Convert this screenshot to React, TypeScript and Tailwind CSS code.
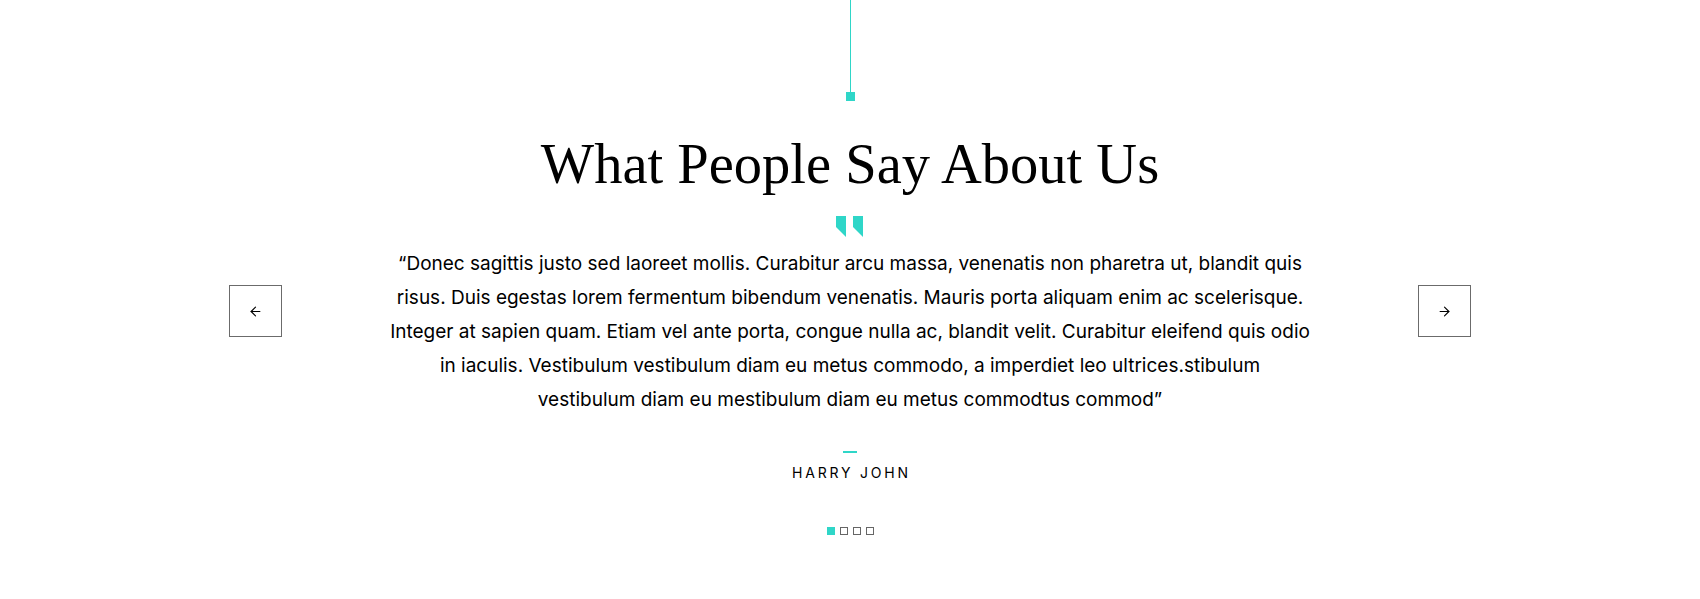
import { ArrowLeft, ArrowRight } from "lucide-react";

const lines = [
  "“Donec sagittis justo sed laoreet mollis. Curabitur arcu massa, venenatis non pharetra ut, blandit quis",
  "risus. Duis egestas lorem fermentum bibendum venenatis. Mauris porta aliquam enim ac scelerisque.",
  "Integer at sapien quam. Etiam vel ante porta, congue nulla ac, blandit velit. Curabitur eleifend quis odio",
  "in iaculis. Vestibulum vestibulum diam eu metus commodo, a imperdiet leo ultrices.stibulum",
  "vestibulum diam eu mestibulum diam eu metus commodtus commod”",
];

function QuoteMark() {
  return (
    <svg width="28" height="21" viewBox="0 0 28 21" className="text-[#2fd6c8]">
      <path d="M0 0H10V21L8 19L0 11Z" fill="currentColor" />
      <path d="M17 0H27V21L25 19L17 11Z" fill="currentColor" />
    </svg>
  );
}

function NavButton({ dir }: { dir: "prev" | "next" }) {
  return (
    <button className="mt-[285px] flex h-[52px] w-[53px] shrink-0 items-center justify-center border border-[#6b6b6b] bg-white text-black">
      {dir === "prev" ? (
        <ArrowLeft size={15} strokeWidth={1.8} />
      ) : (
        <ArrowRight size={15} strokeWidth={1.8} />
      )}
    </button>
  );
}

export default function App() {
  return (
    <div className="h-[599px] w-full overflow-hidden bg-white">
      <div className="flex justify-center gap-[103px]">
        <NavButton dir="prev" />
        <div className="flex w-[930px] flex-col items-center">
          <div className="h-[92px] w-px bg-[#2fd6c8]" />
          <div className="h-[9px] w-[9px] bg-[#2fd6c8]" />
          <h2
            className="mt-[30px] text-[56.5px] leading-[66px] text-black"
            style={{ fontFamily: '"Liberation Serif", serif' }}
          >
            What People Say About Us
          </h2>
          <div className="mt-[19px]">
            <QuoteMark />
          </div>
          <p
            className="mt-[10px] text-center text-[19px] leading-[34px] text-black"
            style={{ fontFamily: 'Inter, "Noto Sans", sans-serif' }}
          >
            {lines.map((l, i) => (
              <span key={i} className="block whitespace-nowrap">
                {l}
              </span>
            ))}
          </p>
          <div className="mt-[34px] h-[2px] w-[14px] bg-[#2fd6c8]" />
          <div
            className="mt-[9px] pl-[3px] text-[14px] tracking-[0.2em] text-black"
            style={{ fontFamily: 'Inter, "Noto Sans", sans-serif' }}
          >
            HARRY JOHN
          </div>
          <div className="mt-[44px] flex gap-[5px]">
            <span className="h-[8px] w-[8px] bg-[#2fd6c8]" />
            <span className="h-[8px] w-[8px] border border-[#666]" />
            <span className="h-[8px] w-[8px] border border-[#666]" />
            <span className="h-[8px] w-[8px] border border-[#666]" />
          </div>
        </div>
        <NavButton dir="next" />
      </div>
    </div>
  );
}
